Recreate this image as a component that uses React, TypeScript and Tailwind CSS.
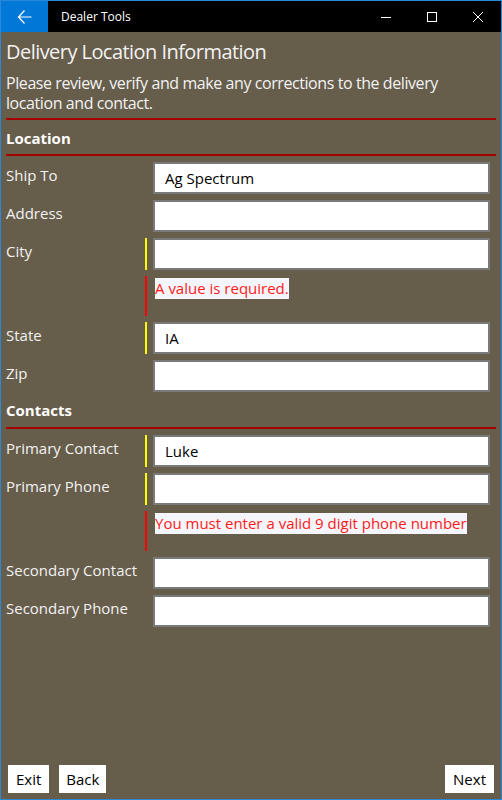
import React from "react";

const font = { fontFamily: '"Open Sans", "Noto Sans", sans-serif' };

function Row({ label, value, required }: { label: string; value?: string; required?: boolean }) {
  return (
    <div className="flex h-[32px] mb-[6px]">
      <div className="w-[139px] text-[15px] text-[#f2f2f2] leading-[20px] pt-[3px] whitespace-nowrap">{label}</div>
      <div className={`w-[2px] h-full ${required ? "bg-[#ffff00]" : ""}`} />
      <div className="ml-[6px] mr-[6px] flex-1 h-full bg-white border-2 border-[#7a7a7a] flex items-center pl-[10px] text-[15px] text-black">
        {value}
      </div>
    </div>
  );
}

function ErrorRow({ text }: { text: string }) {
  return (
    <div className="flex h-[40px] mb-[6px]">
      <div className="w-[139px]" />
      <div className="w-[2px] h-full bg-[#ff0000]" />
      <div className="ml-[8px]">
        <span className="inline-block bg-[#f5f6fb] text-[#ff1a1a] text-[15px] leading-[21px] h-[21px]">{text}</span>
      </div>
    </div>
  );
}

export default function App() {
  return (
    <div className="w-[502px] h-[800px] border border-[#2b88d8] flex flex-col bg-[#675d4b] overflow-hidden" style={font}>
      <div className="h-[31px] bg-black flex items-center shrink-0">
        <div className="w-[47px] h-full bg-[#0078d7] flex items-center justify-center">
          <svg width="16" height="16" viewBox="0 0 16 16" fill="none" stroke="white" strokeWidth="1.2">
            <path d="M1.5 8H14.5M7.5 1.5L1.5 8L7.5 14.5" />
          </svg>
        </div>
        <div className="ml-[13px] text-[12px] text-white">Dealer Tools</div>
        <div className="flex-1" />
        <div className="w-[46px] h-full flex items-center justify-center">
          <svg width="10" height="10" viewBox="0 0 10 10"><path d="M0 5.5H10" stroke="white" strokeWidth="1" /></svg>
        </div>
        <div className="w-[46px] h-full flex items-center justify-center">
          <svg width="10" height="10" viewBox="0 0 10 10"><rect x="0.5" y="0.5" width="9" height="9" fill="none" stroke="white" strokeWidth="1" /></svg>
        </div>
        <div className="w-[46px] h-full flex items-center justify-center">
          <svg width="10" height="10" viewBox="0 0 10 10"><path d="M0 0L10 10M10 0L0 10" stroke="white" strokeWidth="1" /></svg>
        </div>
      </div>
      <div className="flex-1 flex flex-col px-[5px]">
        <div className="text-[20px] leading-[27px] text-[#f2f2f2] mt-[6px] tracking-[-0.55px]">Delivery Location Information</div>
        <div className="text-[16px] leading-[20px] text-[#f2f2f2] mt-[8px] tracking-[-0.42px]">
          Please review, verify and make any corrections to the delivery location and contact.
        </div>
        <div className="h-[2px] bg-[#a50000] mt-[5px]" />
        <div className="text-[15px] font-bold text-white leading-[20px] mt-[8px] mb-[6px]">Location</div>
        <div className="h-[2px] bg-[#a50000] mb-[6px]" />
        <Row label="Ship To" value="Ag Spectrum" />
        <Row label="Address" />
        <Row label="City" required />
        <ErrorRow text="A value is required." />
        <Row label="State" value="IA" required />
        <Row label="Zip" />
        <div className="text-[15px] font-bold text-white leading-[20px] mt-[2px] mb-[7px]">Contacts</div>
        <div className="h-[2px] bg-[#a50000] mb-[6px]" />
        <Row label="Primary Contact" value="Luke" required />
        <Row label="Primary Phone" required />
        <ErrorRow text="You must enter a valid 9 digit phone number" />
        <Row label="Secondary Contact" />
        <Row label="Secondary Phone" />
        <div className="flex-1" />
        <div className="flex items-center mb-[6px] px-[2px]">
          <button className="h-[28px] px-[8px] bg-white text-black text-[15px]">Exit</button>
          <button className="h-[28px] px-[7px] bg-white text-black text-[15px] ml-[10px]">Back</button>
          <div className="flex-1" />
          <button className="h-[28px] px-[8px] bg-white text-black text-[15px]">Next</button>
        </div>
      </div>
    </div>
  );
}
